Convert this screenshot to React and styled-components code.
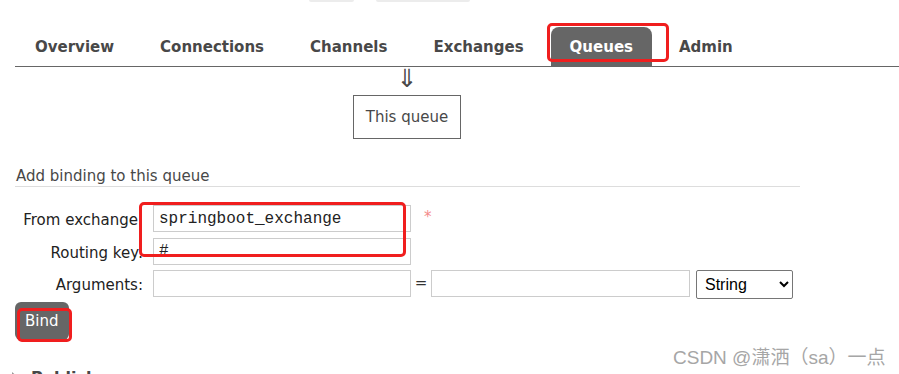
import React from 'react';
import styled, { createGlobalStyle } from 'styled-components';

const GlobalStyle = createGlobalStyle`
  body {
    margin: 0;
    background: #fff;
    font-family: 'DejaVu Sans', Verdana, sans-serif;
    color: #484848;
  }
`;

const Page = styled.div`
  position: relative;
  width: 899px;
  height: 374px;
  overflow: hidden;
`;

const TopStrip = styled.div`
  display: flex;
  gap: 22px;
  height: 2px;
  padding-left: 309px;
`;

const StripBit = styled.div`
  width: ${(p) => p.w}px;
  height: 2px;
  background: #ececec;
  border-radius: 0 0 2px 2px;
`;

const Nav = styled.ul`
  display: flex;
  gap: 8px;
  list-style: none;
  margin: 25px 0 0 15px;
  padding: 0 0 0 1px;
  border-bottom: 1px solid #666;
`;

const Tab = styled.li`
  padding: 1px 19px 0;
  height: 38px;
  line-height: 38px;
  font-size: 15px;
  font-weight: bold;
  color: ${(p) => (p.active ? '#fff' : '#484848')};
  background: ${(p) => (p.active ? '#666' : 'transparent')};
  border-radius: 8px 8px 0 0;
`;

const Flow = styled.div`
  display: flex;
  flex-direction: column;
  align-items: center;
  width: 108px;
  margin-left: 353px;
`;

const Arrow = styled.div`
  height: 28px;
  line-height: 24px;
  font-size: 25px;
  color: #484848;
`;

const QueueBox = styled.div`
  box-sizing: border-box;
  width: 108px;
  height: 44px;
  border: 1px solid #666;
  line-height: 43px;
  text-align: center;
  font-size: 15px;
`;

const Section = styled.div`
  margin-left: 15px;
`;

const SectionTitle = styled.h3`
  width: 784px;
  margin: 27px 0 0;
  padding-left: 1px;
  font-size: 15px;
  font-weight: normal;
  line-height: 20px;
  color: #484848;
  border-bottom: 1px solid #ddd;
`;

const Form = styled.div`
  display: flex;
  flex-direction: column;
  gap: 5.5px;
  margin-top: 18px;
`;

const Row = styled.div`
  display: flex;
  align-items: flex-start;
`;

const Label = styled.label`
  width: 128px;
  margin-right: 10px;
  padding-top: 3px;
  line-height: 24px;
  text-align: right;
  font-size: 15px;
  color: #222;
`;

const Field = styled.input`
  box-sizing: border-box;
  width: ${(p) => p.w || 258}px;
  height: 27px;
  margin: 0;
  padding: 0 5px;
  border: 1px solid #ccc;
  font-family: 'Liberation Mono', 'Courier New', monospace;
  font-size: 16px;
  color: #222;
  outline: none;
`;

const Required = styled.span`
  margin-left: 13px;
  line-height: 24px;
  font-size: 15px;
  color: #f48a8a;
`;

const Eq = styled.span`
  width: 20px;
  line-height: 27px;
  text-align: center;
  font-size: 15px;
  color: #333;
`;

const TypeSelect = styled.select`
  box-sizing: border-box;
  width: 97px;
  height: 29px;
  margin-left: 6px;
  padding: 0 4px;
  border: 1px solid #767676;
  border-radius: 2px;
  background: #fff;
  font-family: 'Liberation Sans', Arial, sans-serif;
  font-size: 16px;
  color: #000;
`;

const BindButton = styled.button`
  margin-top: 3px;
  width: 54px;
  height: 38px;
  border: none;
  border-radius: 6px;
  background: #666;
  color: #fff;
  font-family: 'DejaVu Sans', Verdana, sans-serif;
  font-size: 15px;
  text-align: left;
  padding: 0 0 0 10px;
`;

const Collapsed = styled.h2`
  display: flex;
  align-items: center;
  gap: 12px;
  margin: 28px 0 0 12px;
  font-size: 16px;
  font-weight: bold;
  color: #484848;
  line-height: 20px;
`;

const Triangle = styled.span`
  width: 0;
  height: 0;
  border-top: 6px solid transparent;
  border-bottom: 6px solid transparent;
  border-left: 7px solid #999;
`;

const Highlight = styled.div`
  position: absolute;
  left: ${(p) => p.x}px;
  top: ${(p) => p.y}px;
  width: ${(p) => p.w}px;
  height: ${(p) => p.h}px;
  box-sizing: border-box;
  border: 3px solid #f01e1e;
  border-radius: 5px;
  pointer-events: none;
`;

const Watermark = styled.div`
  position: absolute;
  left: 673px;
  top: 342px;
  font-family: 'Liberation Sans', 'Noto Sans CJK SC', sans-serif;
  font-size: 19px;
  color: #a6a6a6;
  text-shadow: 0 0 1px #fff;
`;

const tabs = ['Overview', 'Connections', 'Channels', 'Exchanges', 'Queues', 'Admin'];

const App = () => (
  <Page>
    <GlobalStyle />
    <TopStrip>
      <StripBit w={45} />
      <StripBit w={94} />
    </TopStrip>
    <Nav>
      {tabs.map((t) => (
        <Tab key={t} active={t === 'Queues'}>
          {t}
        </Tab>
      ))}
    </Nav>

    <Flow>
      <Arrow>⇓</Arrow>
      <QueueBox>This queue</QueueBox>
    </Flow>

    <Section>
      <SectionTitle>Add binding to this queue</SectionTitle>
      <Form>
        <Row>
          <Label>From exchange:</Label>
          <Field defaultValue="springboot_exchange" />
          <Required>*</Required>
        </Row>
        <Row>
          <Label>Routing key:</Label>
          <Field defaultValue="#" />
        </Row>
        <Row>
          <Label>Arguments:</Label>
          <Field />
          <Eq>=</Eq>
          <Field w={259} />
          <TypeSelect defaultValue="String">
            <option>String</option>
            <option>Number</option>
            <option>Boolean</option>
            <option>List</option>
          </TypeSelect>
        </Row>
      </Form>
      <BindButton>Bind</BindButton>
    </Section>

    <Collapsed>
      <Triangle />
      Publish message
    </Collapsed>

    <Highlight x={547} y={23} w={122} h={39} />
    <Highlight x={139} y={202} w={267} h={55} />
    <Highlight x={17} y={308} w={55} h={34} />

    <Watermark>CSDN @潇洒（sa）一点</Watermark>
  </Page>
);

export default App;
